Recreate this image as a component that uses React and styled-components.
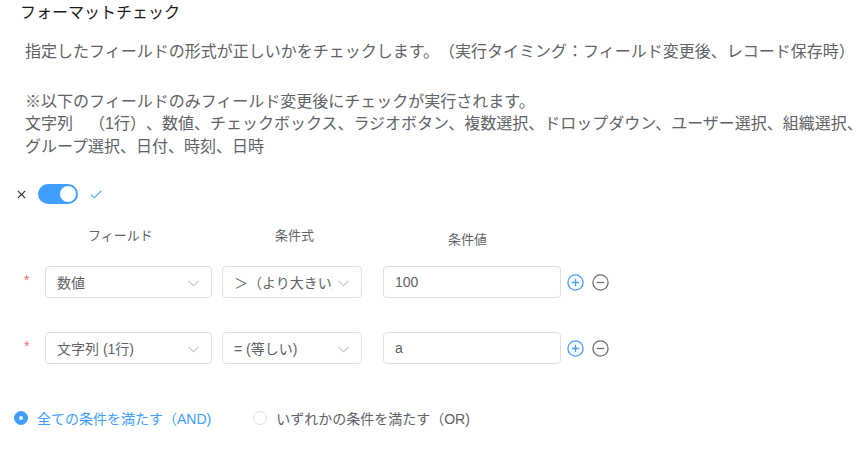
import React from "react";
import styled, { createGlobalStyle } from "styled-components";

const GlobalStyle = createGlobalStyle`
  html, body {
    margin: 0;
    padding: 0;
    background: #ffffff;
    overflow: hidden;
  }
  body {
    font-family: "Liberation Sans", "Noto Sans CJK JP", sans-serif;
    color: #606266;
    text-spacing-trim: space-all;
  }
`;

const Page = styled.div`
  width: 862px;
  height: 458px;
  padding-top: 2px;
  box-sizing: border-box;
`;

const Title = styled.div`
  margin-left: 20px;
  font-size: 16px;
  line-height: 22px;
  color: #1a1a1a;
`;

const Description = styled.div`
  margin-left: 25px;
  margin-top: ${({ $top }) => $top}px;
  font-size: 16px;
  line-height: 22.5px;
  color: #606266;
`;

const Line = styled.div`
  white-space: nowrap;
`;

const SwitchRow = styled.div`
  display: flex;
  align-items: center;
  height: 20px;
  margin-top: 26px;
  padding-left: 17px;
`;

const SwitchTrack = styled.span`
  position: relative;
  display: inline-block;
  width: 40px;
  height: 20px;
  border-radius: 10px;
  background: #409eff;
  margin: 0 12px 0 12px;
`;

const SwitchKnob = styled.span`
  position: absolute;
  top: 2px;
  right: 2px;
  width: 16px;
  height: 16px;
  border-radius: 50%;
  background: #ffffff;
`;

const HeaderRow = styled.div`
  display: flex;
  height: 20px;
  margin-top: 22px;
  padding-left: 45px;
  font-size: 13px;
  line-height: 20px;
  color: #606266;
`;

const HeaderCell = styled.div`
  width: ${({ $width }) => $width}px;
  padding-left: ${({ $indent }) => $indent}px;
  padding-top: ${({ $drop }) => $drop || 0}px;
  box-sizing: border-box;
  white-space: nowrap;
`;

const ConditionRow = styled.div`
  display: flex;
  align-items: center;
  height: 32px;
  margin-top: ${({ $top }) => $top}px;
  padding-left: 24px;
`;

const Required = styled.span`
  width: 21px;
  color: #f56c6c;
  font-size: 14px;
  line-height: 14px;
  align-self: center;
  margin-top: -4px;
`;

const Select = styled.div`
  position: relative;
  display: flex;
  align-items: center;
  width: ${({ $width }) => $width}px;
  height: 32px;
  margin-right: ${({ $gap }) => $gap}px;
  padding: 0 28px 0 11px;
  box-sizing: border-box;
  border: 1px solid #dcdfe6;
  border-radius: 4px;
  background: #fff;
  font-size: 14px;
  color: #606266;
`;

const SelectText = styled.span`
  flex: 1;
  overflow: hidden;
  white-space: nowrap;
`;

const Arrow = styled.svg`
  position: absolute;
  right: 12px;
  top: 13px;
`;

const TextInput = styled.div`
  display: flex;
  align-items: center;
  width: 178px;
  height: 32px;
  padding: 0 11px;
  box-sizing: border-box;
  border: 1px solid #dcdfe6;
  border-radius: 4px;
  font-size: 14px;
  color: #606266;
`;

const IconButton = styled.svg`
  margin-left: ${({ $gap }) => $gap}px;
  flex: none;
`;

const RadioGroup = styled.div`
  display: flex;
  align-items: center;
  height: 20px;
  margin-top: 44px;
  padding-left: 14px;
  gap: 42px;
`;

const RadioLabel = styled.label`
  display: flex;
  align-items: center;
  font-size: 14px;
  color: ${({ $checked }) => ($checked ? "#409eff" : "#606266")};
`;

const RadioDot = styled.span`
  position: relative;
  width: 14px;
  height: 14px;
  box-sizing: border-box;
  border-radius: 50%;
  margin-right: 9px;
  border: 1px solid ${({ $checked }) => ($checked ? "#409eff" : "#dcdfe6")};
  background: ${({ $checked }) => ($checked ? "#409eff" : "#fff")};
  &::after {
    content: "";
    display: ${({ $checked }) => ($checked ? "block" : "none")};
    position: absolute;
    left: 50%;
    top: 50%;
    width: 4px;
    height: 4px;
    margin: -2px 0 0 -2px;
    border-radius: 50%;
    background: #fff;
  }
`;

const ChevronDown = () => (
  <Arrow width="11" height="7" viewBox="0 0 11 7">
    <path d="M0.5 0.8 L5.5 5.8 L10.5 0.8" fill="none" stroke="#c0c4cc" strokeWidth="1.1" />
  </Arrow>
);

const PlusCircle = () => (
  <IconButton $gap={6} width="17" height="17" viewBox="0 0 17 17">
    <circle cx="8.5" cy="8.5" r="7.6" fill="none" stroke="#409eff" strokeWidth="1.3" />
    <path d="M8.5 4.8 V12.2 M4.8 8.5 H12.2" stroke="#409eff" strokeWidth="1.3" />
  </IconButton>
);

const MinusCircle = () => (
  <IconButton $gap={8} width="17" height="17" viewBox="0 0 17 17">
    <circle cx="8.5" cy="8.5" r="7.6" fill="none" stroke="#6b6e75" strokeWidth="1.3" />
    <path d="M4.8 8.5 H12.2" stroke="#6b6e75" strokeWidth="1.3" />
  </IconButton>
);

const conditions = [
  { field: "数値", op: "＞（より大きい）", value: "100", top: 20 },
  { field: "文字列 (1行)", op: "= (等しい)", value: "a", top: 34 },
];

export default function App() {
  return (
    <Page>
      <GlobalStyle />
      <Title>フォーマットチェック</Title>
      <Description $top={17}>
        <Line>指定したフィールドの形式が正しいかをチェックします。（実行タイミング：フィールド変更後、レコード保存時）</Line>
      </Description>
      <Description $top={27}>
        <Line>※以下のフィールドのみフィールド変更後にチェックが実行されます。</Line>
        <Line>文字列　（1行）、数値、チェックボックス、ラジオボタン、複数選択、ドロップダウン、ユーザー選択、組織選択、</Line>
        <Line>グループ選択、日付、時刻、日時</Line>
      </Description>

      <SwitchRow>
        <svg width="9" height="9" viewBox="0 0 9 9">
          <path d="M0.8 0.8 L8.2 8.2 M8.2 0.8 L0.8 8.2" stroke="#303133" strokeWidth="1.2" />
        </svg>
        <SwitchTrack>
          <SwitchKnob />
        </SwitchTrack>
        <svg width="12" height="9" viewBox="0 0 12 9">
          <path d="M0.8 4.6 L4.2 7.8 L11.2 0.8" fill="none" stroke="#409eff" strokeWidth="1.1" />
        </svg>
      </SwitchRow>

      <HeaderRow>
        <HeaderCell $width={177} $indent={43}>フィールド</HeaderCell>
        <HeaderCell $width={161} $indent={53}>条件式</HeaderCell>
        <HeaderCell $width={178} $indent={65} $drop={4}>条件値</HeaderCell>
      </HeaderRow>

      {conditions.map((c, i) => (
        <ConditionRow key={i} $top={c.top}>
          <Required>*</Required>
          <Select $width={167} $gap={10}>
            <SelectText>{c.field}</SelectText>
            <ChevronDown />
          </Select>
          <Select $width={140} $gap={21}>
            <SelectText>{c.op}</SelectText>
            <ChevronDown />
          </Select>
          <TextInput>{c.value}</TextInput>
          <PlusCircle />
          <MinusCircle />
        </ConditionRow>
      ))}

      <RadioGroup>
        <RadioLabel $checked>
          <RadioDot $checked />
          全ての条件を満たす（AND)
        </RadioLabel>
        <RadioLabel>
          <RadioDot />
          いずれかの条件を満たす（OR)
        </RadioLabel>
      </RadioGroup>
    </Page>
  );
}
